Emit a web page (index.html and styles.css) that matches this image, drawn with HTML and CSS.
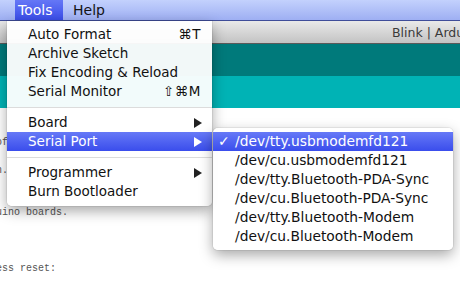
FILE: index.html
```html
<!DOCTYPE html>
<html>
   <head>
      <title>Blink | Arduino</title>
      <link rel="stylesheet" href="styles.css">
   </head>
   <body>
      <div class="menubar">
         <span class="menu-title active">Tools</span>
         <span class="menu-title">Help</span>
      </div>
      <div class="window">
         <div class="titlebar"><span class="title">Blink | Arduino 1.0.5</span></div>
         <div class="toolbar"></div>
         <div class="tabs"></div>
         <pre class="editor">/*
  Blink
  Turns on an LED on for one second, then off for one second, repeatedly.

  This example code is in the public domain.
 */

// Pin 13 has an LED connected on most Arduino boards.
// give it a name:
int led = 13;

// the setup routine runs once when you press reset:</pre>
      </div>

      <div class="menu tools-menu">
         <div class="item"><span>Auto Format</span><span class="key">&#8984;T</span></div>
         <div class="item"><span>Archive Sketch</span></div>
         <div class="item"><span>Fix Encoding &amp; Reload</span></div>
         <div class="item"><span>Serial Monitor</span><span class="key">&#8679;&#8984;M</span></div>
         <div class="separator"></div>
         <div class="item"><span>Board</span><span class="arrow"></span></div>
         <div class="item selected"><span>Serial Port</span><span class="arrow"></span></div>
         <div class="separator"></div>
         <div class="item"><span>Programmer</span><span class="arrow"></span></div>
         <div class="item"><span>Burn Bootloader</span></div>
      </div>

      <div class="menu port-menu">
         <div class="item selected"><span class="check">&#10003;</span><span>/dev/tty.usbmodemfd121</span></div>
         <div class="item"><span class="check"></span><span>/dev/cu.usbmodemfd121</span></div>
         <div class="item"><span class="check"></span><span>/dev/tty.Bluetooth-PDA-Sync</span></div>
         <div class="item"><span class="check"></span><span>/dev/cu.Bluetooth-PDA-Sync</span></div>
         <div class="item"><span class="check"></span><span>/dev/tty.Bluetooth-Modem</span></div>
         <div class="item"><span class="check"></span><span>/dev/cu.Bluetooth-Modem</span></div>
      </div>
   </body>
</html>
```
FILE: styles.css
```css
body {
   margin: 0;
   padding: 0;
   width: 460px;
   height: 283px;
   overflow: hidden;
   position: relative;
   font-family: "DejaVu Sans", sans-serif;
   background-color: #FFFFFF;
}
.menubar {
   display: flex;
   height: 20px;
   padding-left: 15px;
   background: linear-gradient(#c3d1fd, #9eaff3);
   border-bottom: 1px solid #3f4d99;
}
.menu-title {
   padding: 0 10px;
   font-size: 14px;
   line-height: 20px;
   color: #141414;
}
.menu-title.active {
   width: 45px;
   padding: 0 0 0 3px;
   color: #FFFFFF;
   background: linear-gradient(#6577f6, #3a4de9);
}
.window {
   overflow: hidden;
   height: 262px;
}
.titlebar {
   height: 22px;
   background: linear-gradient(#e9e9e9, #c3c3c3);
   border-bottom: 1px solid #5a5a5a;
   padding-left: 392px;
   white-space: nowrap;
}
.title {
   font-size: 12.5px;
   line-height: 23px;
   color: #3a3a3a;
}
.toolbar {
   height: 32px;
   background-color: #007a7b;
}
.tabs {
   height: 32px;
   background-color: #00b3b5;
}
.editor {
   margin: 0 0 0 -256px;
   font-family: "Liberation Mono", monospace;
   font-size: 10px;
   line-height: 14px;
   color: #555555;
}
.menu {
   position: absolute;
   background-color: rgba(255, 255, 255, 0.95);
   box-shadow: 0 5px 14px rgba(0, 0, 0, 0.35), 0 0 0 1px rgba(0, 0, 0, 0.06);
   font-size: 13.5px;
   color: #111111;
}
.tools-menu {
   left: 7px;
   top: 21px;
   width: 205px;
   padding: 4px 0 5px 0;
   border-radius: 0 0 5px 5px;
}
.port-menu {
   left: 213px;
   top: 128px;
   width: 240px;
   padding: 4px 0;
   border-radius: 5px;
   font-size: 13.8px;
}
.item {
   display: flex;
   justify-content: space-between;
   align-items: center;
   height: 19px;
   line-height: 19px;
   padding: 0 11px 0 21px;
   white-space: nowrap;
}
.port-menu .item {
   justify-content: flex-start;
   padding-left: 5px;
}
.item.selected {
   color: #FFFFFF;
   background: linear-gradient(#6679f7, #3a4dec);
}
.key {
   letter-spacing: 0.5px;
}
.arrow {
   width: 0;
   height: 0;
   margin-right: -1px;
   border-top: 5px solid transparent;
   border-bottom: 5px solid transparent;
   border-left: 8px solid #222222;
}
.selected .arrow {
   border-left-color: #FFFFFF;
}
.check {
   width: 17px;
   font-size: 14px;
}
.separator {
   height: 1px;
   margin: 6px 0 5px 0;
   background-color: #dcdcdc;
}
```
